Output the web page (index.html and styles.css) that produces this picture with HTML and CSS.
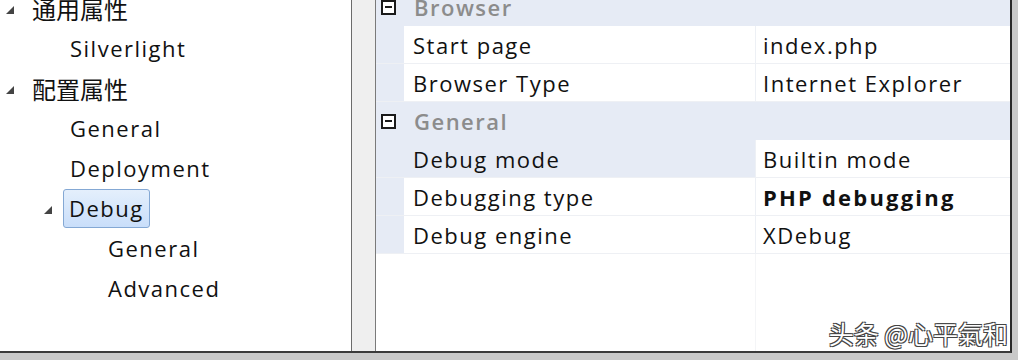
FILE: index.html
```html
<!DOCTYPE html>
<html lang="zh-CN">
<head>
    <meta charset="UTF-8">
    <title>Property Pages</title>
    <link rel="stylesheet" href="styles.css">
</head>
<body>
    <div class="frame">
        <div class="tree">
            <div class="node lvl0"><span class="tri"></span><span class="label">通用属性</span></div>
            <div class="node lvl1"><span class="label">Silverlight</span></div>
            <div class="node lvl0"><span class="tri"></span><span class="label">配置属性</span></div>
            <div class="node lvl1"><span class="label">General</span></div>
            <div class="node lvl1"><span class="label">Deployment</span></div>
            <div class="node lvl1b"><span class="tri"></span><span class="label selected">Debug</span></div>
            <div class="node lvl2"><span class="label">General</span></div>
            <div class="node lvl2"><span class="label">Advanced</span></div>
        </div>
        <div class="splitter"></div>
        <div class="grid">
            <div class="cat"><span class="box"></span><span class="cat-name">Browser</span></div>
            <div class="prop"><span class="gutter"></span><span class="name">Start page</span><span class="value">index.php</span></div>
            <div class="prop"><span class="gutter"></span><span class="name">Browser Type</span><span class="value">Internet Explorer</span></div>
            <div class="cat"><span class="box"></span><span class="cat-name">General</span></div>
            <div class="prop active"><span class="gutter"></span><span class="name">Debug mode</span><span class="value">Builtin mode</span></div>
            <div class="prop"><span class="gutter"></span><span class="name">Debugging type</span><span class="value bold">PHP debugging</span></div>
            <div class="prop"><span class="gutter"></span><span class="name">Debug engine</span><span class="value">XDebug</span></div>
            <div class="empty"><span class="blank"></span><span class="blank-val"></span></div>
        </div>
    </div>
    <div class="watermark">头条 @心平氣和</div>
</body>
</html>
```

FILE: styles.css
```css
body {
    margin: 0;
    width: 1018px;
    height: 360px;
    overflow: hidden;
    background-color: #c9c9c9;
    font-family: 'Open Sans', 'Noto Sans', 'Noto Sans CJK SC', sans-serif;
    color: #111;
    position: relative;
}
.frame {
    display: flex;
    width: 1010px;
    height: 351px;
    border-right: 2px solid #2a2a2a;
    border-bottom: 2px solid #3a3a3a;
    background: #fff;
}
.tree {
    width: 351px;
    border-right: 1px solid #6b6b6b;
    background: #fff;
    margin-top: -12px;
}
.node {
    display: flex;
    align-items: center;
    height: 40px;
    font-size: 22px;
    letter-spacing: 1.5px;
}
.lvl0 { padding-left: 6px; }
.lvl1 { padding-left: 70px; }
.lvl1b { padding-left: 44px; }
.lvl2 { padding-left: 108px; }
.lvl0 .label {
    margin-left: 18px;
    font-family: 'Noto Sans CJK SC', sans-serif;
    font-size: 24px;
    letter-spacing: 0;
}
.tri {
    width: 0;
    height: 0;
    border-left: 8px solid transparent;
    border-bottom: 8px solid #444;
    margin-top: 4px;
}
.lvl1b .tri { margin-right: 11px; }
.label.selected {
    padding: 3px 5px 4px 5px;
    border: 1px solid #84a8d4;
    border-radius: 3px;
    background: linear-gradient(#e4effc, #c9defa);
}
.splitter {
    width: 23px;
    background: #efefef;
    border-right: 1px solid #7a7a7a;
}
.grid {
    flex: 1;
    display: flex;
    flex-direction: column;
    margin-top: -12px;
    font-size: 22px;
    letter-spacing: 1.5px;
}
.cat {
    display: flex;
    align-items: center;
    height: 38px;
    background: #e6ebf5;
}
.box {
    width: 11px;
    height: 11px;
    border: 2px solid #1a1a1a;
    margin: 0 18px 0 5px;
    position: relative;
    background: #fff;
}
.box::after {
    content: '';
    position: absolute;
    left: 2px;
    right: 2px;
    top: 4px;
    height: 2px;
    background: #1a1a1a;
}
.cat-name {
    color: #8c8c8c;
    font-weight: 600;
}
.prop {
    display: flex;
    height: 38px;
    border-bottom: 1px solid #eef0f4;
    box-sizing: border-box;
}
.gutter {
    width: 28px;
    background: #e6ebf5;
}
.name {
    width: 342px;
    padding-left: 9px;
    display: flex;
    align-items: center;
    border-right: 1px solid #edf0f5;
}
.prop.active .name {
    background: #e6ebf5;
}
.value {
    flex: 1;
    padding-left: 7px;
    display: flex;
    align-items: center;
}
.value.bold {
    font-weight: 700;
    letter-spacing: 2.2px;
}
.empty {
    flex: 1;
    display: flex;
}
.blank {
    width: 379px;
    border-right: 1px solid #f4f5f7;
}
.watermark {
    position: absolute;
    right: 10px;
    bottom: 9px;
    font-family: 'Noto Sans CJK SC', sans-serif;
    font-size: 25px;
    color: #fff;
    text-shadow: -1px -1px 0 #444, 1px 1px 0 #444, 1px -1px 0 #444, -1px 1px 0 #444;
}
```
